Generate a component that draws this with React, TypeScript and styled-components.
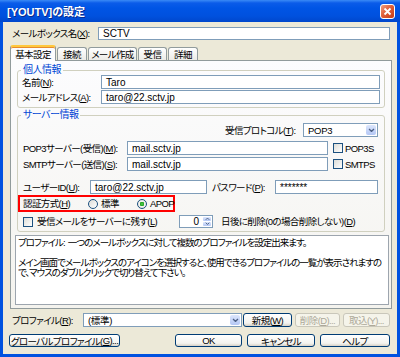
import React from 'react';
import styled, { createGlobalStyle } from 'styled-components';

const GlobalStyle = createGlobalStyle`
    html, body {
        margin: 0;
        padding: 0;
        background: #ffffff;
    }
    body {
        font-family: 'Liberation Sans', 'Noto Sans CJK JP', sans-serif;
        font-size: 9.5px;
        letter-spacing: -1px;
        font-feature-settings: 'palt';
        color: #000000;
    }
    u {
        text-underline-offset: 1px;
    }
`

const Window = styled.div`
    width: 400px;
    height: 357px;
    display: flex;
    flex-direction: column;
    overflow: hidden;
`

const TitleBar = styled.div`
    flex: none;
    height: 22px;
    display: flex;
    align-items: center;
    padding: 0 5px 0 7px;
    box-sizing: border-box;
    background: linear-gradient(to bottom, #3a8af6 0px, #0b5ce9 3px, #0055e5 8px, #0051de 16px, #0047cc 22px);
`

const Title = styled.span`
    color: #ffffff;
    font-weight: bold;
    font-size: 11px;
    letter-spacing: 0;
    text-shadow: 1px 1px 0 #0a2a8c;
    white-space: nowrap;
`

const CloseButton = styled.div`
    margin-left: auto;
    width: 15px;
    height: 15px;
    box-sizing: border-box;
    border: 1px solid #ffffff;
    border-radius: 3px;
    background: linear-gradient(135deg, #f0a080 0%, #e0603a 45%, #c63c16 100%);
    display: flex;
    align-items: center;
    justify-content: center;
`

const Frame = styled.div`
    flex: 1;
    display: flex;
    flex-direction: column;
    background: #ece9d8;
    border-style: solid;
    border-color: #0052e0;
    border-width: 0 3px 3px 3px;
`

const Row = styled.div<{ $top: number; $h?: number; $left?: number }>`
    display: flex;
    align-items: center;
    margin-top: ${p => p.$top}px;
    height: ${p => p.$h ?? 14}px;
    padding-left: ${p => p.$left ?? 0}px;
    flex: none;
`

const Label = styled.span<{ $w?: number }>`
    flex: none;
    ${p => (p.$w ? `width: ${p.$w}px;` : '')}
    white-space: nowrap;
    line-height: 11px;
    letter-spacing: -0.6px;
`

const TextBox = styled.div<{ $w?: number }>`
    box-sizing: border-box;
    height: 100%;
    ${p => (p.$w ? `width: ${p.$w}px; flex: none;` : 'flex: 1;')}
    border: 1px solid #7f9db9;
    background: #ffffff;
    padding: 0 4px;
    display: flex;
    align-items: center;
    white-space: nowrap;
    overflow: hidden;
    font-size: 10px;
    letter-spacing: 0;
`

const TabStrip = styled.div`
    display: flex;
    align-items: flex-end;
    height: 15px;
    margin: 5px 0 0 7px;
    flex: none;
`

const Tab = styled.div<{ $w: number; $active?: boolean }>`
    width: ${p => p.$w}px;
    box-sizing: border-box;
    margin-right: 1px;
    display: flex;
    align-items: center;
    justify-content: center;
    white-space: nowrap;
    letter-spacing: -0.6px;
    border: 1px solid #919b9c;
    border-bottom: none;
    border-radius: 3px 3px 0 0;
    height: ${p => (p.$active ? 16 : 13)}px;
    margin-bottom: ${p => (p.$active ? -1 : 0)}px;
    position: relative;
    z-index: ${p => (p.$active ? 1 : 0)};
    background: ${p => (p.$active ? '#fcfcfe' : 'linear-gradient(#ffffff, #ecebe6)')};
    border-top: ${p => (p.$active ? '2px solid #ffc83c' : '1px solid #919b9c')};
    box-shadow: ${p => (p.$active ? 'inset 0 1px 0 #e68b2c' : 'none')};
`

const Panel = styled.div`
    margin-left: 7px;
    width: 382px;
    box-sizing: border-box;
    border: 1px solid #919b9c;
    padding: 4px 6px 3px 6px;
    display: flex;
    flex-direction: column;
    background: linear-gradient(#fcfcfe, #f4f3ee);
    flex: none;
`

const Group = styled.fieldset<{ $top?: number }>`
    margin: ${p => p.$top ?? 0}px 0 0 0;
    padding: 0 4px 3px 4px;
    border: 1px solid #d0d0bf;
    border-radius: 3px;
    display: flex;
    flex-direction: column;
    min-width: 0;
`

const Legend = styled.legend`
    padding: 0 2px;
    margin-left: -1px;
    color: #0046d5;
    line-height: 10px;
    height: 10px;
    font-size: 10px;
    letter-spacing: -0.5px;
`

const PersonalGrid = styled.div`
    display: grid;
    grid-template-columns: 79px 1fr;
    grid-auto-rows: 14px;
    row-gap: 1px;
    align-items: center;
`

const CheckBox = styled.span<{ $gap?: number }>`
    flex: none;
    width: 10px;
    height: 10px;
    box-sizing: border-box;
    border: 1px solid #1c5180;
    background: linear-gradient(135deg, #dcdcd7, #ffffff);
    margin-right: ${p => p.$gap ?? 3}px;
`

const Radio = styled.span<{ $checked?: boolean }>`
    flex: none;
    width: 10px;
    height: 10px;
    box-sizing: border-box;
    border: 1px solid #1c5180;
    border-radius: 50%;
    background: ${p =>
        p.$checked
            ? 'radial-gradient(circle, #55d14f 0, #21a121 2px, #f4f4f0 2.5px, #dcdcd7 100%)'
            : 'linear-gradient(135deg, #dcdcd7, #ffffff)'};
    margin-right: 3px;
`

const AuthBox = styled.div`
    display: flex;
    align-items: center;
    margin: 1px 0 0 -4px;
    height: 17px;
    width: 157px;
    box-sizing: border-box;
    border: 2px solid #ff0000;
    padding-left: 3px;
    flex: none;
`

const Combo = styled.div<{ $w: number }>`
    flex: none;
    width: ${p => p.$w}px;
    height: 100%;
    box-sizing: border-box;
    border: 1px solid #7f9db9;
    background: #ffffff;
    display: flex;
`

const ComboText = styled.span`
    flex: 1;
    padding-left: 4px;
    display: flex;
    align-items: center;
    white-space: nowrap;
    letter-spacing: -0.3px;
`

const ArrowBox = styled.span`
    flex: none;
    width: 10px;
    margin: 1px;
    border-radius: 2px;
    background: linear-gradient(#dce6fc, #b4c7f5);
    display: flex;
    align-items: center;
    justify-content: center;
`

const Spin = styled.div`
    flex: none;
    width: 34px;
    height: 100%;
    box-sizing: border-box;
    border: 1px solid #7f9db9;
    background: #ffffff;
    display: flex;
    margin-right: 8px;
`

const SpinValue = styled.span`
    flex: 1;
    display: flex;
    align-items: center;
    justify-content: flex-end;
    padding-right: 4px;
    font-size: 10px;
`

const SpinArrows = styled.span`
    flex: none;
    width: 8px;
    margin: 1px;
    display: flex;
    flex-direction: column;
    gap: 1px;
`

const SpinArrow = styled.span`
    flex: 1;
    border-radius: 1px;
    background: linear-gradient(#dce6fc, #b4c7f5);
    display: flex;
    align-items: center;
    justify-content: center;
`

const Description = styled.div`
    margin: 3px -4px 0 -2px;
    height: 70px;
    box-sizing: border-box;
    border: 1px solid #9da5ae;
    background: #ffffff;
    padding: 2px 2px;
    line-height: 10px;
    white-space: nowrap;
    overflow: hidden;
`

const Button = styled.div<{ $w: number; $gap?: number; $disabled?: boolean }>`
    flex: none;
    width: ${p => p.$w}px;
    margin-left: ${p => p.$gap ?? 0}px;
    height: 100%;
    box-sizing: border-box;
    border: 1px solid ${p => (p.$disabled ? '#c9c7ba' : '#003c74')};
    border-radius: 3px;
    background: ${p => (p.$disabled ? '#f5f4ea' : 'linear-gradient(#ffffff, #f3f3ef 75%, #d6d0c5)')};
    color: ${p => (p.$disabled ? '#aca899' : '#000000')};
    display: flex;
    align-items: center;
    justify-content: center;
    white-space: nowrap;
    letter-spacing: -0.6px;
`

const Chevron: React.FC<{ up?: boolean; size?: number }> = ({ up, size = 7 }) => (
    <svg width={size} height={size * 0.7} viewBox="0 0 7 5">
        <polyline
            points={up ? '1,4 3.5,1.5 6,4' : '1,1 3.5,3.5 6,1'}
            fill="none"
            stroke="#4d6185"
            strokeWidth="1.4"
        />
    </svg>
);

const App: React.FC = () => {
    return (
        <Window>
            <GlobalStyle />
            <TitleBar>
                <Title>[YOUTV]の設定</Title>
                <CloseButton>
                    <svg width="9" height="9" viewBox="0 0 9 9">
                        <path d="M1.5 1.5 L7.5 7.5 M7.5 1.5 L1.5 7.5" stroke="#ffffff" strokeWidth="1.8" />
                    </svg>
                </CloseButton>
            </TitleBar>
            <Frame>
                <Row $top={5} $h={13} $left={9}>
                    <Label $w={86}>メールボックス名(<u>X</u>):</Label>
                    <TextBox $w={292}>SCTV</TextBox>
                </Row>
                <TabStrip>
                    <Tab $w={46} $active>基本設定</Tab>
                    <Tab $w={30}>接続</Tab>
                    <Tab $w={49}>メール作成</Tab>
                    <Tab $w={29}>受信</Tab>
                    <Tab $w={30}>詳細</Tab>
                </TabStrip>
                <Panel>
                    <Group>
                        <Legend>個人情報</Legend>
                        <PersonalGrid>
                            <Label>名前(<u>N</u>):</Label>
                            <TextBox>Taro</TextBox>
                            <Label>メールアドレス(<u>A</u>):</Label>
                            <TextBox>taro@22.sctv.jp</TextBox>
                        </PersonalGrid>
                    </Group>
                    <Group $top={2}>
                        <Legend>サーバー情報</Legend>
                        <Row $top={3} $left={203}>
                            <Label $w={78}>受信プロトコル(<u>T</u>):</Label>
                            <Combo $w={75}>
                                <ComboText>POP3</ComboText>
                                <ArrowBox><Chevron /></ArrowBox>
                            </Combo>
                        </Row>
                        <Row $top={4} $left={1}>
                            <Label $w={104}>POP3サーバー(受信)(<u>M</u>):</Label>
                            <TextBox $w={201}>mail.sctv.jp</TextBox>
                            <CheckBox style={{ marginLeft: 5 }} $gap={2} />
                            <Label>POP3S</Label>
                        </Row>
                        <Row $top={2} $left={1}>
                            <Label $w={104}>SMTPサーバー(送信)(<u>S</u>):</Label>
                            <TextBox $w={201}>mail.sctv.jp</TextBox>
                            <CheckBox style={{ marginLeft: 5 }} $gap={2} />
                            <Label>SMTPS</Label>
                        </Row>
                        <Row $top={9} $left={1}>
                            <Label $w={67}>ユーザーID(<u>U</u>):</Label>
                            <TextBox $w={117}>taro@22.sctv.jp</TextBox>
                            <Label $w={63} style={{ marginLeft: 5 }}>パスワード(<u>P</u>):</Label>
                            <TextBox $w={103}>*******</TextBox>
                        </Row>
                        <AuthBox>
                            <Label $w={65}>認証方式(<u>H</u>)</Label>
                            <Radio />
                            <Label $w={36}>標準</Label>
                            <Radio $checked />
                            <Label>APOP</Label>
                        </AuthBox>
                        <Row $top={3} $h={13} $left={1}>
                            <CheckBox $gap={4} />
                            <Label $w={142}>受信メールをサーバーに残す(<u>L</u>)</Label>
                            <Spin>
                                <SpinValue>0</SpinValue>
                                <SpinArrows>
                                    <SpinArrow><Chevron up size={5} /></SpinArrow>
                                    <SpinArrow><Chevron size={5} /></SpinArrow>
                                </SpinArrows>
                            </Spin>
                            <Label>日後に削除(0の場合削除しない)(<u>D</u>)</Label>
                        </Row>
                    </Group>
                    <Description>
                        プロファイル:&nbsp;&nbsp;一つのメールボックスに対して複数のプロファイルを設定出来ます。
                        <br />
                        <br />
                        メイン画面でメールボックスのアイコンを選択すると、使用できるプロファイルの一覧が表示されますの
                        <br />
                        で、マウスのダブルクリックで切り替えて下さい。
                    </Description>
                </Panel>
                <Row $top={4} $left={9}>
                    <Label $w={71}>プロファイル(<u>R</u>):</Label>
                    <Combo $w={159}>
                        <ComboText>(標準)</ComboText>
                        <ArrowBox><Chevron /></ArrowBox>
                    </Combo>
                    <Button $w={49} $gap={1}>新規(<u>W</u>)</Button>
                    <Button $w={45} $gap={3} $disabled>削除(<u>D</u>)...</Button>
                    <Button $w={47} $gap={3} $disabled>取込(<u>Y</u>)...</Button>
                </Row>
                <Row $top={7} $h={13} $left={6}>
                    <Button $w={111}>グローバルプロファイル(<u>G</u>)...</Button>
                    <Button $w={67} $gap={55}>OK</Button>
                    <Button $w={68} $gap={5}>キャンセル</Button>
                    <Button $w={70} $gap={5}>ヘルプ</Button>
                </Row>
            </Frame>
        </Window>
    );
};

export default App;
